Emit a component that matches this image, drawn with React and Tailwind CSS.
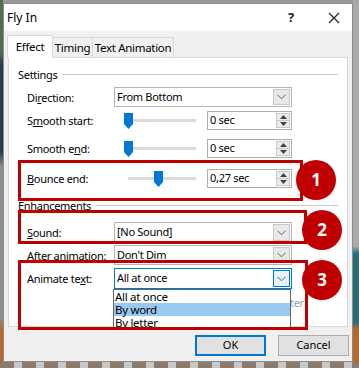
import React from 'react';

const font = "font-['Noto_Sans',_'Liberation_Sans',_sans-serif]";

function Chevron() {
  return (
    <svg width="9" height="6" viewBox="0 0 9 6">
      <path d="M0.5 0.8 L4.5 4.8 L8.5 0.8" fill="none" stroke="#606060" strokeWidth="1" />
    </svg>
  );
}

function Combo({ value, focused = false, height = 'h-[20px]' }) {
  return (
    <div
      className={`w-[178px] ${height} flex items-stretch bg-white border ${
        focused ? 'border-[#0078d7]' : 'border-[#b4b4b4]'
      }`}
    >
      <div className="flex-1 flex items-center pl-[2px] whitespace-nowrap">{value}</div>
      <div
        className={`w-[17px] my-[1px] mr-[1px] flex items-center justify-center border ${
          focused ? 'border-[#0078d7] bg-[#e5f1fb]' : 'border-[#c8c8c8] bg-[#e8e8e8]'
        }`}
      >
        <Chevron />
      </div>
    </div>
  );
}

function Spin({ value }) {
  return (
    <div className="w-[85px] h-[19px] flex items-stretch bg-white border border-[#adadad]">
      <div className="flex-1 flex items-center pl-[2px] whitespace-nowrap">{value}</div>
      <div className="w-[14px] my-[1px] mr-[1px] flex flex-col border border-[#c8c8c8] bg-[#ececec]">
        <div className="flex-1 flex items-center justify-center border-b border-[#c8c8c8]">
          <svg width="7" height="4" viewBox="0 0 7 4">
            <path d="M0 4 L3.5 0 L7 4 Z" fill="#404040" />
          </svg>
        </div>
        <div className="flex-1 flex items-center justify-center">
          <svg width="7" height="4" viewBox="0 0 7 4">
            <path d="M0 0 L3.5 4 L7 0 Z" fill="#404040" />
          </svg>
        </div>
      </div>
    </div>
  );
}

function Slider({ pos }) {
  return (
    <div className="w-[93px] h-[19px] flex items-center">
      <div className="relative ml-[14px] w-[68px] h-[3px] bg-[#dadada]">
        <svg
          width="9"
          height="16"
          viewBox="0 0 9 16"
          className="absolute top-[-6px]"
          style={{ left: pos }}
        >
          <path d="M0 0 H9 V11 L4.5 16 L0 11 Z" fill="#0078d7" />
        </svg>
      </div>
    </div>
  );
}

function Label({ children }) {
  return <div className="w-[105px] pl-[18px] whitespace-nowrap leading-none">{children}</div>;
}

function Group({ title }) {
  return (
    <div className="h-[14px] flex items-center pl-[9px] pr-[9px] gap-[5px]">
      <span className="leading-none whitespace-nowrap">{title}</span>
      <div className="flex-1 h-px bg-[#c8c8c8]" />
    </div>
  );
}

function Badge({ n, className }) {
  return (
    <div
      className={`absolute w-[40px] h-[40px] rounded-full bg-[#c00000] flex items-center justify-center text-white text-[17px] font-bold tracking-normal ${className}`}
    >
      {n}
    </div>
  );
}

export default function App() {
  return (
    <div
      className={`relative w-[359px] h-[368px] overflow-hidden flex flex-col bg-[#9a9a9a] text-[11px] tracking-[-0.3px] text-black ${font}`}
    >
      <div className="flex h-[362px]">
        <div className="w-[3px] bg-[linear-gradient(to_bottom,#4f6f4f_0%,#4f6f4f_14%,#2c3b48_18%,#2c3b48_42%,#8a8f90_46%,#8a8f90_88%,#b8692a_91%)]" />

        <div className="w-[350px] flex flex-col border border-[#8c8c8c] bg-[#f0f0f0] mt-[3px]">
          {/* title bar */}
          <div className="h-[27px] bg-white flex items-center pl-[3px] pr-[12px]">
            <span className="text-[12px] tracking-normal">Fly In</span>
            <span className="ml-auto mr-[34px] text-[13px] text-[#222] font-bold">?</span>
            <svg width="12" height="12" viewBox="0 0 12 12">
              <path d="M1 1 L11 11 M11 1 L1 11" stroke="#222" strokeWidth="1.2" />
            </svg>
          </div>

          {/* tabs */}
          <div className="flex items-end pl-[3px] mt-[3px] h-[23px]">
            <div className="w-[46px] h-[23px] bg-white border border-[#d9d9d9] border-b-0 flex items-center justify-center text-[11.5px] relative z-10 -mb-px">
              Effect
            </div>
            <div className="w-[40px] h-[20px] border border-[#d9d9d9] border-l-0 border-b-0 flex items-center justify-center text-[11.5px] whitespace-nowrap">
              Timing
            </div>
            <div className="w-[81px] h-[20px] border border-[#d9d9d9] border-l-0 border-b-0 flex items-center justify-center text-[11.5px] whitespace-nowrap">
              Text Animation
            </div>
          </div>

          {/* panel */}
          <div className="mx-[4px] h-[270px] bg-white border border-[#d9d9d9] flex flex-col">
            <div className="mt-[9px]">
              <Group title="Settings" />
            </div>

            <div className="mt-[6px] h-[20px] flex items-center">
              <Label>
                Di<u>r</u>ection:
              </Label>
              <Combo value="From Bottom" />
            </div>

            <div className="mt-[4px] h-[19px] flex items-center">
              <Label>
                S<u>m</u>ooth start:
              </Label>
              <Slider pos={-4} />
              <Spin value="0 sec" />
            </div>

            <div className="mt-[9px] h-[19px] flex items-center">
              <Label>
                Smooth e<u>n</u>d:
              </Label>
              <Slider pos={-4} />
              <Spin value="0 sec" />
            </div>

            <div className="mt-[11px] h-[19px] flex items-center">
              <Label>
                <u>B</u>ounce end:
              </Label>
              <Slider pos={26} />
              <Spin value="0,27 sec" />
            </div>

            <div className="mt-[10px]">
              <Group title="Enhancements" />
            </div>

            <div className="mt-[10px] h-[21px] flex items-center">
              <Label>
                <u>S</u>ound:
              </Label>
              <Combo value="[No Sound]" height="h-[21px]" />
            </div>

            <div className="mt-[2px] h-[20px] flex items-center">
              <Label>After animation:</Label>
              <Combo value="Don't Dim" />
            </div>

            <div className="mt-[3px] h-[21px] flex items-center">
              <Label>
                Animate te<u>x</u>t:
              </Label>
              <Combo value="All at once" focused height="h-[21px]" />
            </div>
          </div>

          {/* buttons */}
          <div className="flex justify-end gap-[12px] pr-[3px] mt-[8px]">
            <button className="w-[71px] h-[21px] bg-[#e1e1e1] border-2 border-[#0078d7] tracking-normal">
              OK
            </button>
            <button className="w-[71px] h-[21px] bg-[#e1e1e1] border border-[#adadad] tracking-normal">
              Cancel
            </button>
          </div>
        </div>

        <div className="flex-1 bg-[linear-gradient(to_bottom,#a9a9a9_0%,#a9a9a9_68%,#2a6d78_70%,#2a6d78_89%,#b8692a_91%)]" />
      </div>
      <div className="flex-1 bg-[repeating-linear-gradient(to_right,#8c7a6a_0px,#8c7a6a_14px,#c8c8c8_14px,#c8c8c8_22px)]" />

      {/* partially hidden label behind the list */}
      <span className="absolute left-[290px] top-[297px] text-[#a0a0a0] leading-none">ter</span>

      {/* open dropdown list */}
      <div className="absolute left-[113px] top-[289px] w-[178px] h-[41px] bg-white border border-[#646464] flex flex-col text-[11.5px] leading-[13px]">
        <div className="h-[13px] pl-[1px]">All at once</div>
        <div className="h-[13px] pl-[1px] bg-[#99c9ef]">By word</div>
        <div className="h-[13px] pl-[1px]">By letter</div>
      </div>

      {/* annotations */}
      <div className="absolute left-[18px] top-[160px] w-[285px] h-[41px] border-[3px] border-[#c00000]" />
      <div className="absolute left-[18px] top-[210px] w-[289px] h-[34px] border-[3px] border-[#c00000]" />
      <div className="absolute left-[18px] top-[260px] w-[290px] h-[70px] border-[3px] border-[#c00000]" />
      <Badge n="1" className="left-[296px] top-[160px]" />
      <Badge n="2" className="left-[302px] top-[210px]" />
      <Badge n="3" className="left-[302px] top-[260px]" />
    </div>
  );
}
